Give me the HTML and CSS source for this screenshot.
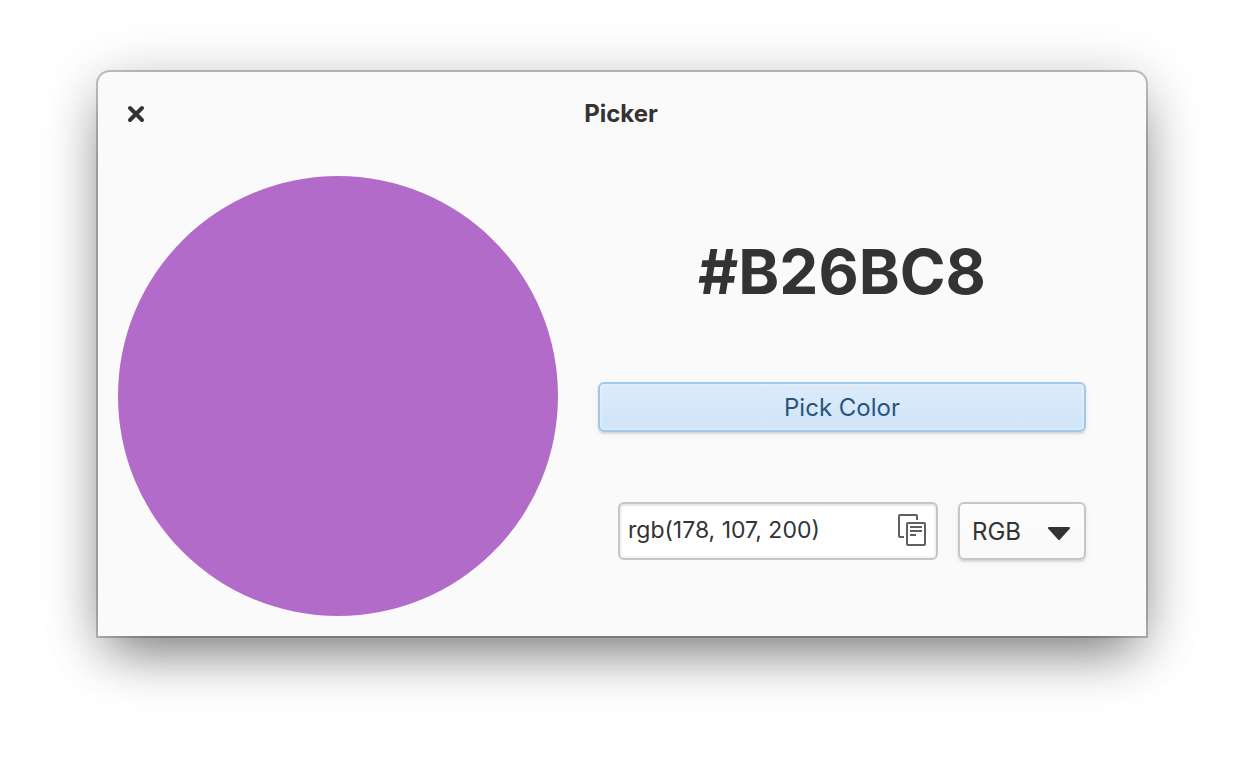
FILE: index.html
```
<!DOCTYPE html>
<html lang="en">
<head>
<meta charset="utf-8">
<title>Picker</title>
<link rel="stylesheet" href="styles.css">
</head>
<body>
<main class="window">
  <header class="titlebar">
    <button class="close" type="button" aria-label="Close">
      <svg width="18" height="18" viewBox="0 0 18 18"><path d="M3 3l12 12M15 3L3 15"/></svg>
    </button>
    <h1 class="title">Picker</h1>
  </header>
  <div class="content">
    <div class="swatch"></div>
    <section class="controls">
      <h2 class="hex">#B26BC8</h2>
      <button class="pick" type="button">Pick Color</button>
      <div class="formats">
        <div class="entry">
          <input class="value" type="text" aria-label="Color value" value="rgb(178, 107, 200)">
          <button class="copy" type="button" aria-label="Copy">
            <svg width="28" height="32" viewBox="0 0 28 32"><path d="M6 23H2Q1 23 1 22V2Q1 1 2 1H18Q19 1 19 2V6"/><rect x="9" y="9" width="18" height="22" rx="1"/><path d="M12 13H24M12 17H24M12 21H18"/></svg>
          </button>
        </div>
        <div class="format">
          <select class="select" aria-label="Format"><option>RGB</option><option>HEX</option></select>
          <svg class="arrow" width="22" height="14" viewBox="0 0 22 14"><path d="M1 2H21L11 13Z"/></svg>
        </div>
      </div>
    </section>
  </div>
</main>
</body>
</html>
```
FILE: styles.css
```
* { box-sizing: border-box; }
body {
  margin: 0;
  padding: 72px 98px 124px;
  background: #fff;
  color: #333;
  font-family: Inter, sans-serif;
}
.window {
  background: #fafafa;
  border-radius: 12px 12px 0 0;
  padding-bottom: 20px;
  box-shadow:
    0 0 0 2px rgba(0, 0, 0, .22),
    0 6px 60px rgba(0, 0, 0, .18),
    0 26px 52px -12px rgba(0, 0, 0, .46);
}
.titlebar {
  display: grid;
  grid-template-columns: 76px 1fr 78px;
  align-items: center;
  height: 84px;
}
.close { border: 0; padding: 0; background: none; line-height: 0; }
.close path { stroke: #333; stroke-width: 4; stroke-linecap: round; }
.title { margin: 0; font-size: 24px; line-height: 28px; font-weight: 700; text-align: center; }
.content { display: flex; padding: 20px 60px 0 20px; gap: 40px; }
.swatch { width: 440px; aspect-ratio: 1; border-radius: 50%; background: #b26bc8; flex: none; }
.controls { flex: 1; min-width: 0; padding-top: 56px; }
.hex { margin: 0 0 70px; font-size: 62px; line-height: 80px; font-weight: 700; text-align: center; }
.pick {
  display: block;
  width: 100%;
  height: 50px;
  border: 2px solid #a0c8eb;
  border-radius: 6px;
  background: linear-gradient(#dcebfa, #d0e5f9);
  box-shadow: inset 0 0 0 2px rgba(255, 255, 255, .2), 0 2px 2px rgba(0, 0, 0, .12), 0 2px 10px rgba(0, 0, 0, .04);
  color: #27557f;
  font: 24px Inter, sans-serif;
}
.formats { display: flex; gap: 20px; margin: 70px 0 0 20px; }
.entry {
  flex: 1;
  min-width: 0;
  display: flex;
  align-items: center;
  height: 58px;
  border: 2px solid #c6c6c6;
  border-radius: 6px;
  background: #fff;
  box-shadow: inset 0 2px 0 #e8e8e8, inset 0 0 0 2px #f4f4f4;
  padding: 0 10px 2px 8px;
}
.value { flex: 1; min-width: 0; border: 0; padding: 0; background: none; color: #333; font: 23px Inter, sans-serif; outline: 0; }
.copy { border: 0; padding: 0; background: none; line-height: 0; }
.copy svg { fill: none; stroke: #5f5f5f; stroke-width: 2; }
.format { display: grid; width: 128px; }
.format > * { grid-area: 1 / 1; }
.select {
  appearance: none;
  border: 2px solid #c6c6c6;
  border-radius: 6px;
  background: linear-gradient(#fcfcfc, #f9f9f9);
  box-shadow: 0 2px 2px rgba(0, 0, 0, .12), 0 2px 10px rgba(0, 0, 0, .04);
  padding: 0 12px;
  color: #333;
  font: 24px Inter, sans-serif;
}
.arrow { place-self: center end; margin: 4px 16px 0 0; fill: #333; stroke: #333; stroke-width: 2; stroke-linejoin: round; pointer-events: none; }
```
